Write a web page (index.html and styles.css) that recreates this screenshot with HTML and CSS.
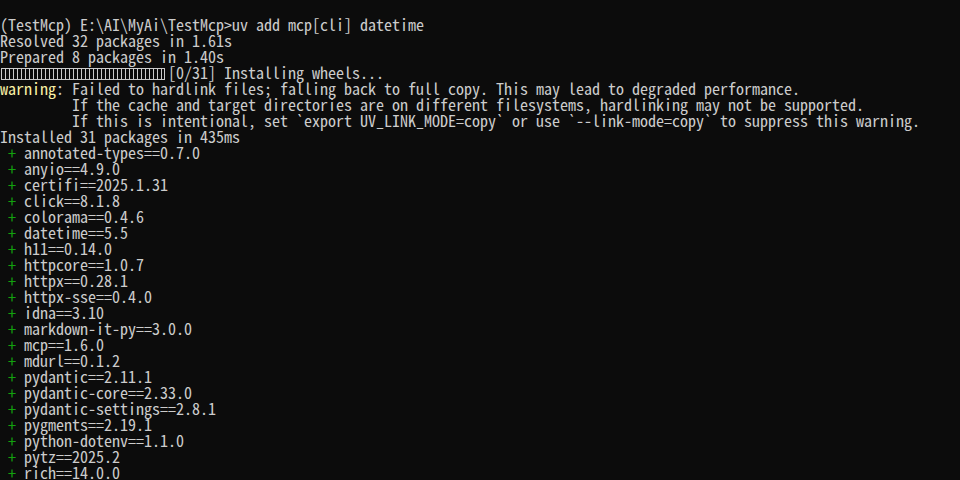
FILE: index.html
```html
<!DOCTYPE html>
<html>
<head>
<meta charset="utf-8">
<link rel="stylesheet" href="styles.css">
</head>
<body>
<pre class="term"><span class="line">(TestMcp) E:\AI\MyAi\TestMcp&gt;uv add mcp[cli] datetime</span>
<span class="line">Resolved 32 packages in 1.61s</span>
<span class="line">Prepared 8 packages in 1.40s</span>
<span class="line"><span class="bar"><span class="bar-box"></span></span>[0/31] Installing wheels...</span>
<span class="line"><span class="warn">warning</span>: Failed to hardlink files; falling back to full copy. This may lead to degraded performance.</span>
<span class="line">         If the cache and target directories are on different filesystems, hardlinking may not be supported.</span>
<span class="line">         If this is intentional, set `export UV_LINK_MODE=copy` or use `--link-mode=copy` to suppress this warning.</span>
<span class="line">Installed 31 packages in 435ms</span>
<span class="line"> <span class="plus">+</span> annotated-types==0.7.0</span>
<span class="line"> <span class="plus">+</span> anyio==4.9.0</span>
<span class="line"> <span class="plus">+</span> certifi==2025.1.31</span>
<span class="line"> <span class="plus">+</span> click==8.1.8</span>
<span class="line"> <span class="plus">+</span> colorama==0.4.6</span>
<span class="line"> <span class="plus">+</span> datetime==5.5</span>
<span class="line"> <span class="plus">+</span> h11==0.14.0</span>
<span class="line"> <span class="plus">+</span> httpcore==1.0.7</span>
<span class="line"> <span class="plus">+</span> httpx==0.28.1</span>
<span class="line"> <span class="plus">+</span> httpx-sse==0.4.0</span>
<span class="line"> <span class="plus">+</span> idna==3.10</span>
<span class="line"> <span class="plus">+</span> markdown-it-py==3.0.0</span>
<span class="line"> <span class="plus">+</span> mcp==1.6.0</span>
<span class="line"> <span class="plus">+</span> mdurl==0.1.2</span>
<span class="line"> <span class="plus">+</span> pydantic==2.11.1</span>
<span class="line"> <span class="plus">+</span> pydantic-core==2.33.0</span>
<span class="line"> <span class="plus">+</span> pydantic-settings==2.8.1</span>
<span class="line"> <span class="plus">+</span> pygments==2.19.1</span>
<span class="line"> <span class="plus">+</span> python-dotenv==1.1.0</span>
<span class="line"> <span class="plus">+</span> pytz==2025.2</span>
<span class="line"> <span class="plus">+</span> rich==14.0.0</span></pre>
</body>
</html>
```

FILE: styles.css
```css
html, body {
  margin: 0;
  padding: 0;
  background: #0c0c0c;
  height: 100%;
  overflow: hidden;
}

.term {
  margin: 0;
  padding: 16px 0 0 0;
  font-family: "Noto Sans Mono CJK SC", "Liberation Mono", monospace;
  font-size: 16px;
  line-height: 16px;
  color: #cccccc;
  white-space: pre;
}

.line {
  display: inline;
}

.warn {
  color: #f9f1a5;
}

.plus {
  color: #13a10e;
}

.bar {
  display: inline-block;
  width: 168px;
  height: 16px;
  vertical-align: top;
  position: relative;
}

.bar-box {
  position: absolute;
  left: 1px;
  top: 4px;
  width: 162px;
  height: 10px;
  border: 1px solid #cccccc;
  background: repeating-linear-gradient(90deg, transparent 0, transparent 3px, #cccccc 3px, #cccccc 4px);
}
```
